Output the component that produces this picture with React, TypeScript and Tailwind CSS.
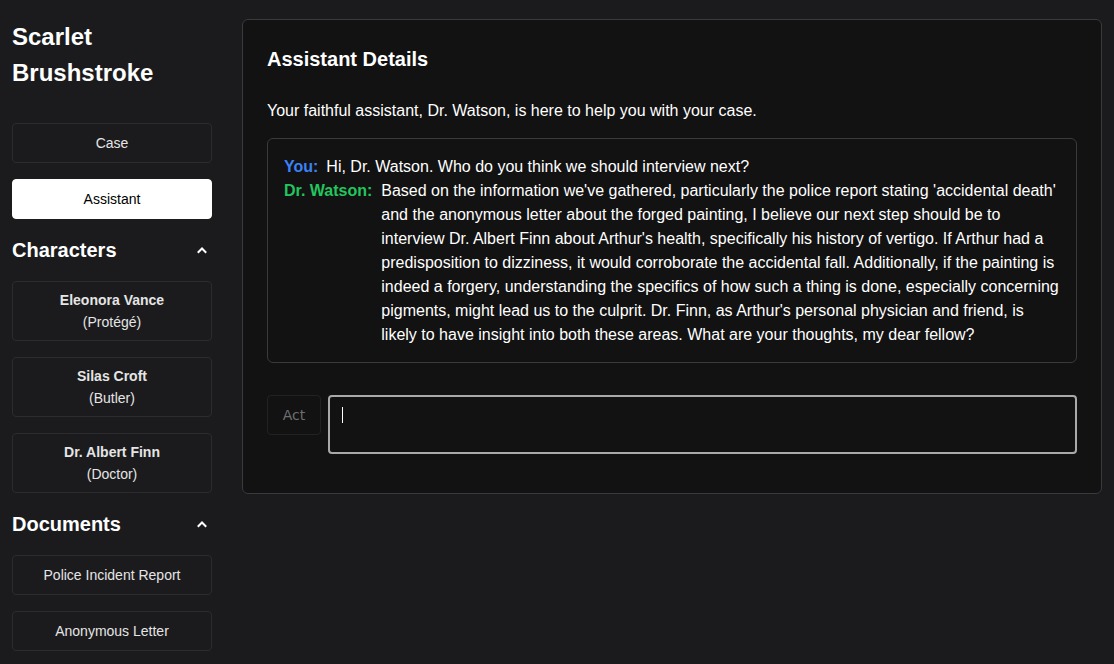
import React from "react";

const Chevron = () => (
  <svg width="12" height="8" viewBox="0 0 12 8" fill="none" stroke="white" strokeWidth="2" strokeLinecap="square">
    <path d="M2.5 6 L6 2.5 L9.5 6" />
  </svg>
);

const Btn = ({ children, active = false }: { children: React.ReactNode; active?: boolean }) => (
  <div
    className={
      "flex h-10 w-full items-center justify-center rounded border text-sm " +
      (active ? "border-white bg-white text-black" : "border-[#2c2c2e] text-[#e5e5e5]")
    }
  >
    {children}
  </div>
);

const Char = ({ name, role }: { name: string; role: string }) => (
  <div className="flex h-[60px] w-full flex-col items-center justify-center rounded border border-[#2c2c2e] text-sm leading-[22px] text-[#e5e5e5]">
    <div className="font-bold">{name}</div>
    <div>({role})</div>
  </div>
);

export default function App() {
  return (
    <div
      className="flex h-[664px] w-[1114px] overflow-hidden bg-[#1b1b1d] text-white"
      style={{ fontFamily: '"Liberation Sans", Arial, sans-serif' }}
    >
      <aside className="flex w-[200px] shrink-0 flex-col ml-3 pt-[19px]">
        <h1 className="text-2xl font-bold leading-9">Scarlet Brushstroke</h1>
        <div className="mt-[32px] flex flex-col gap-4">
          <Btn>Case</Btn>
          <Btn active>Assistant</Btn>
        </div>
        <div className="mt-[17px] flex items-center justify-between pr-[4px]">
          <h2 className="text-xl font-bold leading-7">Characters</h2>
          <Chevron />
        </div>
        <div className="mt-[17px] flex flex-col gap-4">
          <Char name="Eleonora Vance" role="Protégé" />
          <Char name="Silas Croft" role="Butler" />
          <Char name="Dr. Albert Finn" role="Doctor" />
        </div>
        <div className="mt-[17px] flex items-center justify-between pr-[4px]">
          <h2 className="text-xl font-bold leading-7">Documents</h2>
          <Chevron />
        </div>
        <div className="mt-[17px] flex flex-col gap-4">
          <Btn>Police Incident Report</Btn>
          <Btn>Anonymous Letter</Btn>
        </div>
      </aside>
      <main className="ml-[30px] mr-[12px] mt-[19px] flex-1 self-start">
        <div className="rounded-md border border-[#3a3a3c] bg-[#121212] px-6 pt-[25px] pb-[39px]">
          <h2 className="text-xl font-bold leading-7">Assistant Details</h2>
          <p className="mt-[26px] text-base leading-6">
            Your faithful assistant, Dr. Watson, is here to help you with your case.
          </p>
          <div className="mt-[15px] rounded-md border border-[#3a3a3c] px-4 pt-[16px] pb-[15px] text-base leading-6">
            <div className="flex gap-2">
              <span className="shrink-0 font-bold text-[#3b82f6]">You:</span>
              <span>Hi, Dr. Watson. Who do you think we should interview next?</span>
            </div>
            <div className="flex gap-[9px]">
              <span className="shrink-0 font-bold text-[#22c55e]">Dr. Watson:</span>
              <span>
                Based on the information we've gathered, particularly the police report stating 'accidental death'
                and the anonymous letter about the forged painting, I believe our next step should be to interview Dr.
                Albert Finn about Arthur's health, specifically his history of vertigo. If Arthur had a predisposition
                to dizziness, it would corroborate the accidental fall. Additionally, if the painting is indeed a
                forgery, understanding the specifics of how such a thing is done, especially concerning pigments, might
                lead us to the culprit. Dr. Finn, as Arthur's personal physician and friend, is likely to have insight
                into both these areas. What are your thoughts, my dear fellow?
              </span>
            </div>
          </div>
          <div className="mt-[32px] flex gap-[7px]">
            <div
              className="flex h-10 w-[54px] shrink-0 items-center justify-center rounded border border-[#222224] text-sm text-[#6e6e70]"
              style={{ fontFamily: '"DejaVu Sans", sans-serif' }}
            >
              Act
            </div>
            <div className="relative h-[59px] flex-1 rounded border-2 border-[#a9a9ab]">
              <div className="absolute left-[12px] top-[10px] h-[16px] w-px bg-white" />
            </div>
          </div>
        </div>
      </main>
    </div>
  );
}
